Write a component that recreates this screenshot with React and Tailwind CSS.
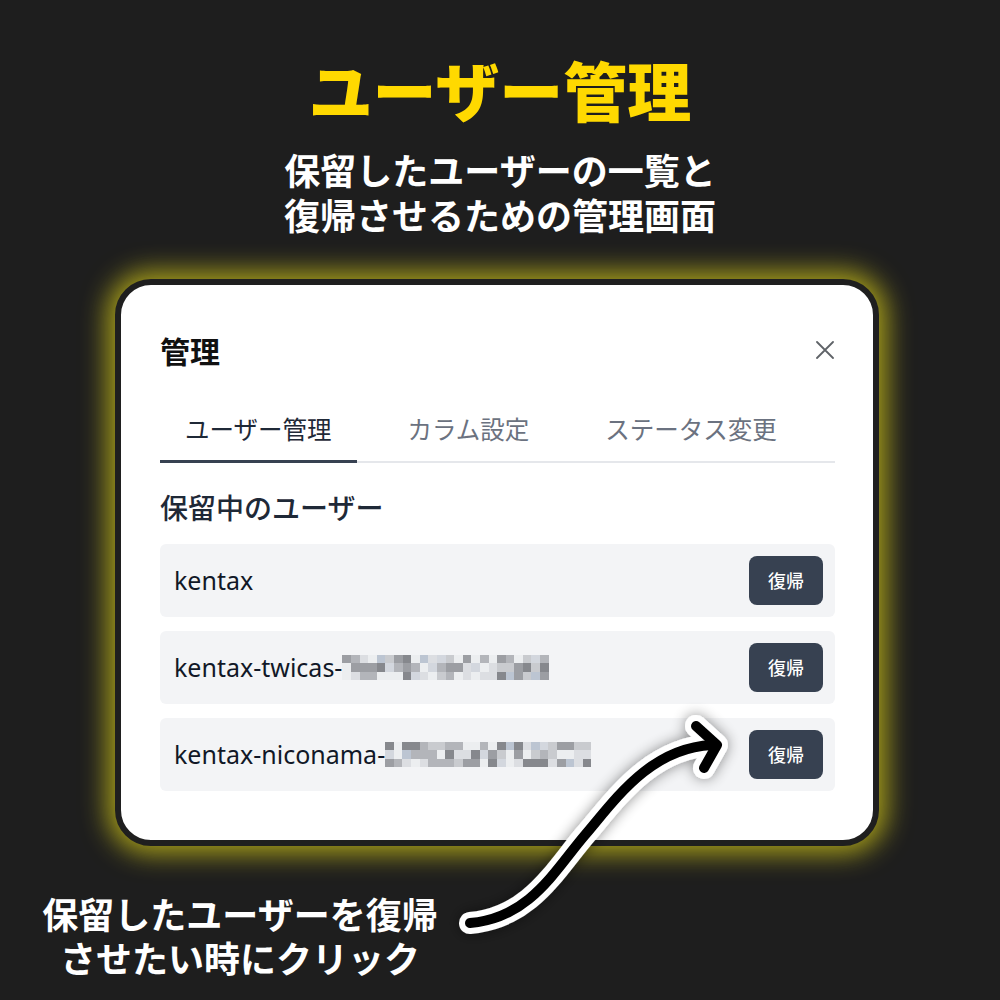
import React from "react";

const JP = { fontFamily: '"Noto Sans CJK JP", "Noto Sans", sans-serif' };
const UI = { fontFamily: '"Noto Sans", "Noto Sans CJK JP", sans-serif' };

const shades = ["#eceef0", "#dcdee2", "#c9cbcf", "#b3b5ba", "#9c9ea3", "#86888d", "#bcc5d2", "#d3d7de"];

function Mosaic({ seed, cols = 24 }) {
  let s = seed;
  const next = () => {
    s = (s * 1103515245 + 12345) % 2147483648;
    return s / 2147483648;
  };
  const cells = [];
  for (let r = 0; r < 3; r++) {
    for (let c = 0; c < cols; c++) {
      const v = next();
      const idx = v < 0.22 ? 0 : v < 0.36 ? 1 : v < 0.5 ? 2 : v < 0.63 ? 3 : v < 0.76 ? 4 : v < 0.86 ? 5 : v < 0.94 ? 6 : 7;
      cells.push(<div key={r + "-" + c} className="w-[8.6px] h-[8.4px]" style={{ background: shades[idx] }} />);
    }
  }
  return (
    <div className="grid" style={{ gridTemplateColumns: `repeat(${cols}, 8.6px)` }}>
      {cells}
    </div>
  );
}

function Row({ name, seed }) {
  return (
    <div className="flex items-center justify-between h-[73px] rounded-md bg-[#f3f4f6] pl-[14px] pr-[12px]">
      <div className="flex items-center">
        <span className="text-[25px] text-[#111827]" style={UI}>{name}</span>
        {seed ? <Mosaic seed={seed} /> : null}
      </div>
      <button className="w-[74px] h-[49px] rounded-lg bg-[#374151] text-white text-[18px] font-medium" style={JP}>
        復帰
      </button>
    </div>
  );
}

export default function App() {
  return (
    <div className="relative w-[1000px] h-[1000px] bg-[#1e1e1e] overflow-hidden" style={JP}>
      <h1 className="pt-[56px] text-center text-[64px] leading-[64px] font-black text-[#ffd900]">ユーザー管理</h1>
      <p className="mt-[27px] text-center text-[36px] leading-[45px] font-bold text-white">
        保留したユーザーの一覧と
        <br />
        復帰させるための管理画面
      </p>

      <div className="mt-[42px] ml-[115px] w-[764px] rounded-[36px] border-[6px] border-[#1f1f1f] bg-white shadow-[0_0_26px_8px_rgba(200,190,25,0.8)]">
        <div className="pt-[50px] pl-[39px] pr-[38px] pb-[49px]">
          <div className="flex items-center justify-between h-[30px]">
            <h2 className="text-[30px] leading-[30px] font-bold text-[#111]">管理</h2>
            <svg width="18" height="18" viewBox="0 0 18 18" className="mr-[1px]">
              <path d="M1 1 L17 17 M17 1 L1 17" stroke="#5f6368" strokeWidth="1.8" strokeLinecap="round" />
            </svg>
          </div>

          <div className="mt-[48px] flex gap-[26px] border-b-2 border-[#e5e7eb]">
            <div className="-mb-[2px] px-[25px] pb-[15px] border-b-[3px] border-[#374151] text-[24.5px] leading-[32px] text-[#1f2937]">
              ユーザー管理
            </div>
            <div className="-mb-[2px] px-[25px] pb-[15px] border-b-[3px] border-transparent text-[24.5px] leading-[32px] text-[#6b7280]">
              カラム設定
            </div>
            <div className="-mb-[2px] px-[25px] pb-[15px] border-b-[3px] border-transparent text-[24.5px] leading-[32px] text-[#6b7280]">
              ステータス変更
            </div>
          </div>

          <h3 className="mt-[28px] text-[28px] leading-[32px] font-medium text-[#1f2937]">保留中のユーザー</h3>

          <div className="mt-[21px] flex flex-col gap-[14px]">
            <Row name="kentax" />
            <Row name="kentax-twicas-" seed={17} />
            <Row name="kentax-niconama-" seed={91} />
          </div>
        </div>
      </div>

      <p className="mt-[45px] w-[480px] text-center text-[36px] leading-[44px] font-bold text-white">
        保留したユーザーを復帰
        <br />
        させたい時にクリック
      </p>

      <svg className="absolute left-0 top-0 pointer-events-none" width="1000" height="1000" viewBox="0 0 1000 1000">
        <defs>
          <filter id="glow" x="-20%" y="-20%" width="140%" height="140%">
            <feGaussianBlur in="SourceAlpha" stdDeviation="7" />
            <feComponentTransfer>
              <feFuncA type="linear" slope="0.45" />
            </feComponentTransfer>
            <feMerge>
              <feMergeNode />
              <feMergeNode in="SourceGraphic" />
            </feMerge>
          </filter>
        </defs>
        <g filter="url(#glow)" fill="none" strokeLinecap="round" strokeLinejoin="round">
          <path d="M470 923 C530 918 555 870 585 835 S650 748 712 745" stroke="#fff" strokeWidth="22" />
          <path d="M696 726 L717 745 L704 768" stroke="#fff" strokeWidth="22" />
          <path d="M470 923 C530 918 555 870 585 835 S650 748 712 745" stroke="#000" strokeWidth="10" />
          <path d="M696 726 L717 745 L704 768" stroke="#000" strokeWidth="10" />
        </g>
      </svg>
    </div>
  );
}
